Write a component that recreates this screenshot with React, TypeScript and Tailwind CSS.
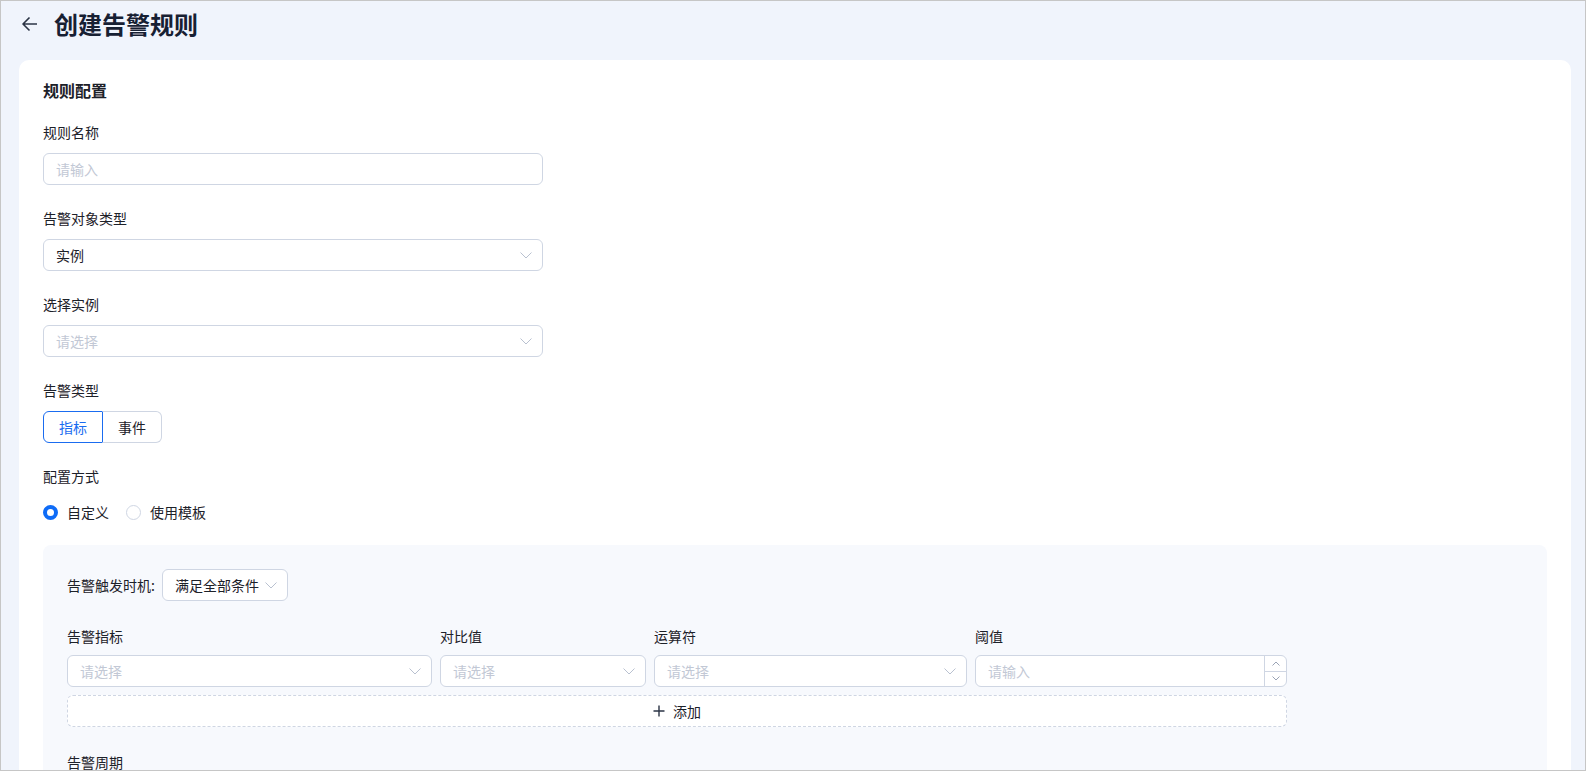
import { useState } from 'react';

const font = { fontFamily: '"Noto Sans CJK SC", "Noto Sans", sans-serif' };

function Chevron({ className = '' }: { className?: string }) {
  return (
    <svg width="12" height="7" viewBox="0 0 12 7" fill="none" className={className}>
      <path d="M0.5 0.5L6 6L11.5 0.5" stroke="#b9c1d0" strokeWidth="1" />
    </svg>
  );
}

function Label({ children }: { children: string }) {
  return <div className="mb-2.5 h-[22px] text-sm leading-[22px] text-[#1d2129]">{children}</div>;
}

function SelectBox({ value, placeholder, className }: { value?: string; placeholder?: string; className: string }) {
  return (
    <div
      className={`flex h-8 items-center justify-between rounded-md border border-[#cfd6e3] bg-white pl-3 pr-[10px] text-sm ${className}`}
    >
      <span className={value ? 'text-[#1d2129]' : 'text-[#c2c8d5]'}>{value ?? placeholder}</span>
      <Chevron />
    </div>
  );
}

export default function App() {
  const [alarmType, setAlarmType] = useState<'metric' | 'event'>('metric');
  const [mode, setMode] = useState<'custom' | 'template'>('custom');

  return (
    <div style={font} className="flex h-screen flex-col overflow-hidden border border-[#c6c6c6] bg-[#f0f4fc]">
      <header className="flex h-[46px] shrink-0 items-center pl-[21px]">
        <svg width="16" height="16" viewBox="0 0 16 16" fill="none">
          <path d="M15 8H1.5M7.5 1.5L1 8l6.5 6.5" stroke="#2b3445" strokeWidth="1.6" strokeLinejoin="round" />
        </svg>
        <h1 className="ml-4 text-2xl font-bold leading-8 text-[#172033]">创建告警规则</h1>
      </header>

      <div className="mt-[13px] pl-[18px] pr-[14px]">
        <div className="rounded-[10px] bg-white px-6 pt-[19px]">
          <h2 className="text-base font-semibold leading-[22px] text-[#1d2129]">规则配置</h2>

          <div className="mt-5">
            <Label>规则名称</Label>
            <input
              placeholder="请输入"
              className="h-8 w-[500px] rounded-md border border-[#cfd6e3] px-3 text-sm text-[#1d2129] outline-none placeholder:text-[#c2c8d5]"
            />
          </div>

          <div className="mt-[22px]">
            <Label>告警对象类型</Label>
            <SelectBox value="实例" className="w-[500px]" />
          </div>

          <div className="mt-[22px]">
            <Label>选择实例</Label>
            <SelectBox placeholder="请选择" className="w-[500px]" />
          </div>

          <div className="mt-[22px]">
            <Label>告警类型</Label>
            <div className="flex h-8 text-sm">
              <button
                onClick={() => setAlarmType('metric')}
                className={`w-[60px] rounded-l-md border ${alarmType === 'metric' ? 'border-[#1a6cf0] text-[#1a6cf0]' : 'border-[#cfd6e3] text-[#1d2129]'}`}
              >
                指标
              </button>
              <button
                onClick={() => setAlarmType('event')}
                className={`-ml-px w-[60px] rounded-r-md border ${alarmType === 'event' ? 'border-[#1a6cf0] text-[#1a6cf0]' : 'border-[#cfd6e3] border-l-transparent text-[#1d2129]'}`}
              >
                事件
              </button>
            </div>
          </div>

          <div className="mt-[22px]">
            <Label>配置方式</Label>
            <div className="flex h-[30px] items-center text-sm text-[#1d2129]">
              <label className="flex cursor-pointer items-center" onClick={() => setMode('custom')}>
                <span
                  className={`h-[15px] w-[15px] rounded-full ${mode === 'custom' ? 'border-[4.5px] border-[#0f6cf7] bg-white' : 'border border-[#cfd6e3] bg-white'}`}
                />
                <span className="ml-[9px]">自定义</span>
              </label>
              <label className="ml-[17px] flex cursor-pointer items-center" onClick={() => setMode('template')}>
                <span
                  className={`h-[15px] w-[15px] rounded-full ${mode === 'template' ? 'border-[4.5px] border-[#0f6cf7] bg-white' : 'border border-[#cfd6e3] bg-white'}`}
                />
                <span className="ml-[9px]">使用模板</span>
              </label>
            </div>
          </div>

          <div className="mt-[18px] rounded-lg bg-[#f7f9fd] px-6 pb-10 pt-6">
            <div className="flex items-center text-sm text-[#1d2129]">
              <span>告警触发时机:</span>
              <SelectBox value="满足全部条件" className="ml-[7px] w-[126px]" />
            </div>

            <div className="mt-6 flex gap-2">
              <div className="w-[365px]">
                <div className="mb-2 h-[22px] text-sm leading-[22px] text-[#1d2129]">告警指标</div>
                <SelectBox placeholder="请选择" className="w-full" />
              </div>
              <div className="w-[206px]">
                <div className="mb-2 h-[22px] text-sm leading-[22px] text-[#1d2129]">对比值</div>
                <SelectBox placeholder="请选择" className="w-full" />
              </div>
              <div className="w-[313px]">
                <div className="mb-2 h-[22px] text-sm leading-[22px] text-[#1d2129]">运算符</div>
                <SelectBox placeholder="请选择" className="w-full" />
              </div>
              <div className="w-[312px]">
                <div className="mb-2 h-[22px] text-sm leading-[22px] text-[#1d2129]">阈值</div>
                <div className="flex h-8 overflow-hidden rounded-md border border-[#cfd6e3] bg-white">
                  <input
                    placeholder="请输入"
                    className="min-w-0 flex-1 px-3 text-sm text-[#1d2129] outline-none placeholder:text-[#c2c8d5]"
                  />
                  <div className="flex w-[22px] flex-col border-l border-[#cfd6e3]">
                    <div className="flex flex-1 items-center justify-center border-b border-[#cfd6e3]">
                      <svg width="8" height="5" viewBox="0 0 8 5" fill="none">
                        <path d="M0.5 4.5L4 1L7.5 4.5" stroke="#9aa3b5" />
                      </svg>
                    </div>
                    <div className="flex flex-1 items-center justify-center">
                      <svg width="8" height="5" viewBox="0 0 8 5" fill="none">
                        <path d="M0.5 0.5L4 4L7.5 0.5" stroke="#9aa3b5" />
                      </svg>
                    </div>
                  </div>
                </div>
              </div>
            </div>

            <button className="mt-2 flex h-8 w-[1220px] items-center justify-center rounded-md border border-dashed border-[#cfd6e3] bg-white text-sm text-[#1d2129]">
              <svg width="12" height="12" viewBox="0 0 12 12" fill="none">
                <path d="M6 0.5V11.5M0.5 6H11.5" stroke="#2b3445" strokeWidth="1.4" />
              </svg>
              <span className="ml-2">添加</span>
            </button>

            <div className="mt-6 h-[22px] text-sm leading-[22px] text-[#1d2129]">告警周期</div>
            <div className="mt-2.5 h-8" />
          </div>
        </div>
      </div>
    </div>
  );
}
